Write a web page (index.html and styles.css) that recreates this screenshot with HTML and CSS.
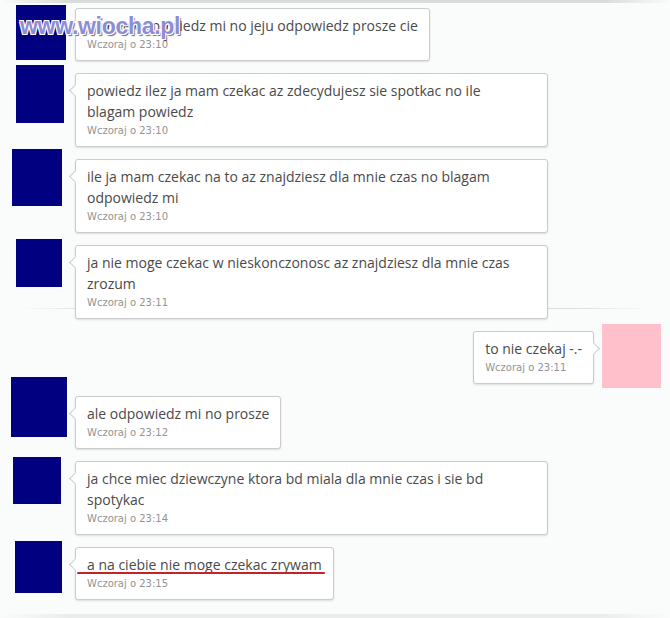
FILE: index.html
```html
<!DOCTYPE html>
<html lang="pl">
<head>
    <meta charset="UTF-8">
    <meta name="viewport" content="width=device-width, initial-scale=1.0">
    <title>Wiadomości</title>
    <link rel="stylesheet" href="styles.css">
</head>
<body>
    <div class="edge edge-top"></div>
    <div class="chat">
        <div class="msg msg-in">
            <div class="side"><div class="avatar av1"></div></div>
            <div class="bubble">
                <p class="text">prosze odpowiedz mi no jeju odpowiedz prosze cie</p>
                <span class="time">Wczoraj o 23:10</span>
            </div>
        </div>

        <div class="msg msg-in">
            <div class="side"><div class="avatar av2"></div></div>
            <div class="bubble bubble-wide">
                <p class="text">powiedz ilez ja mam czekac az zdecydujesz sie spotkac no ile<br>blagam powiedz</p>
                <span class="time">Wczoraj o 23:10</span>
            </div>
        </div>

        <div class="msg msg-in">
            <div class="side"><div class="avatar av3"></div></div>
            <div class="bubble bubble-wide">
                <p class="text">ile ja mam czekac na to az znajdziesz dla mnie czas no blagam<br>odpowiedz mi</p>
                <span class="time">Wczoraj o 23:10</span>
            </div>
        </div>

        <div class="msg msg-in msg-split">
            <div class="side"><div class="avatar av4"></div></div>
            <div class="bubble bubble-wide">
                <p class="text">ja nie moge czekac w nieskonczonosc az znajdziesz dla mnie czas<br>zrozum</p>
                <span class="time">Wczoraj o 23:11</span>
            </div>
        </div>

        <div class="msg msg-out">
            <div class="bubble">
                <p class="text">to nie czekaj -.-</p>
                <span class="time">Wczoraj o 23:11</span>
            </div>
            <div class="side side-out"><div class="avatar avatar-pink"></div></div>
        </div>

        <div class="msg msg-in">
            <div class="side"><div class="avatar av5"></div></div>
            <div class="bubble">
                <p class="text">ale odpowiedz mi no prosze</p>
                <span class="time">Wczoraj o 23:12</span>
            </div>
        </div>

        <div class="msg msg-in">
            <div class="side"><div class="avatar av6"></div></div>
            <div class="bubble bubble-wide">
                <p class="text">ja chce miec dziewczyne ktora bd miala dla mnie czas i sie bd<br>spotykac</p>
                <span class="time">Wczoraj o 23:14</span>
            </div>
        </div>

        <div class="msg msg-in">
            <div class="side"><div class="avatar av7"></div></div>
            <div class="bubble">
                <p class="text marked">a na ciebie nie moge czekac zrywam</p>
                <span class="time">Wczoraj o 23:15</span>
            </div>
        </div>

        <div class="watermark">www.wiocha.pl</div>
    </div>
    <div class="edge edge-bottom"></div>
</body>
</html>
```

FILE: styles.css
```css
body {
    margin: 0;
    padding: 0;
    background-color: #fafbfb;
    font-family: 'Open Sans', sans-serif;
    overflow: hidden;
}
.edge {
    height: 3px;
    background: linear-gradient(to right, rgba(0,0,0,0), rgba(0,0,0,0.13) 10%, rgba(0,0,0,0.13) 90%, rgba(0,0,0,0));
}
.edge-bottom {
    height: 5px;
    margin-top: 14px;
    background: linear-gradient(to right, rgba(0,0,0,0), rgba(0,0,0,0.06) 10%, rgba(0,0,0,0.06) 90%, rgba(0,0,0,0));
}
.chat {
    position: relative;
    padding-top: 5px;
}
.watermark {
    position: absolute;
    left: 20px;
    top: 10px;
    z-index: 5;
    font-family: 'Liberation Sans', sans-serif;
    font-weight: bold;
    font-size: 23px;
    letter-spacing: -0.3px;
    color: #8d8dd4;
    text-shadow: 1px 1px 0 #fff, -1px -1px 0 #fff, 1px -1px 0 #fff, -1px 1px 0 #fff, 2px 2px 1px rgba(0,0,60,0.6);
}
.msg {
    display: flex;
    align-items: flex-start;
    margin-top: 12px;
    position: relative;
}
.chat > .msg:first-child {
    margin-top: 0;
}
.msg-out {
    justify-content: flex-end;
}
.side {
    width: 75px;
    height: 0;
    flex: none;
}
.side-out {
    width: 76px;
}
.avatar {
    background-color: #000080;
}
.av1 { margin: -3px 0 0 16px; width: 50px; height: 55px; }
.av2 { margin: -8px 0 0 16px; width: 48px; height: 58px; }
.av3 { margin: -10px 0 0 12px; width: 50px; height: 57px; }
.av4 { margin: -6px 0 0 16px; width: 46px; height: 48px; }
.av5 { margin: -19px 0 0 11px; width: 56px; height: 60px; }
.av6 { margin: -4px 0 0 13px; width: 48px; height: 47px; }
.av7 { margin: -6px 0 0 15px; width: 47px; height: 52px; }
.avatar-pink {
    margin: -7px 0 0 8px;
    width: 59px;
    height: 64px;
    background-color: #ffc0cb;
}
.bubble {
    position: relative;
    z-index: 1;
    box-sizing: border-box;
    max-width: 473px;
    padding: 6px 11px;
    background-color: #fff;
    border: 1px solid #cbcbcb;
    border-radius: 3px;
    box-shadow: 0 1px 2px rgba(0, 0, 0, 0.12);
}
.bubble-wide {
    width: 473px;
    padding-right: 2px;
}
.bubble::before {
    content: "";
    position: absolute;
    top: 12px;
    left: -5px;
    width: 8px;
    height: 8px;
    background-color: #fff;
    border-left: 1px solid #cbcbcb;
    border-bottom: 1px solid #cbcbcb;
    transform: rotate(45deg);
}
.msg-out .bubble::before {
    left: auto;
    right: -5px;
    transform: rotate(-135deg);
}
.text {
    margin: 0;
    font-size: 14px;
    line-height: 21px;
    color: #4a4a4a;
    white-space: nowrap;
}
.marked {
    position: relative;
}
.marked::after {
    content: "";
    position: absolute;
    left: -10px;
    right: -3px;
    bottom: 1px;
    height: 2px;
    border-radius: 1px;
    background-color: #c4232a;
}
.time {
    display: block;
    font-family: 'DejaVu Sans', sans-serif;
    font-size: 10px;
    line-height: 18px;
    color: #939393;
}
.msg-split::after {
    content: "";
    position: absolute;
    left: 20px;
    right: 20px;
    bottom: 10px;
    height: 1px;
    background: linear-gradient(to right, rgba(0,0,0,0), rgba(0,0,0,0.12) 12%, rgba(0,0,0,0.12) 88%, rgba(0,0,0,0));
}
```
